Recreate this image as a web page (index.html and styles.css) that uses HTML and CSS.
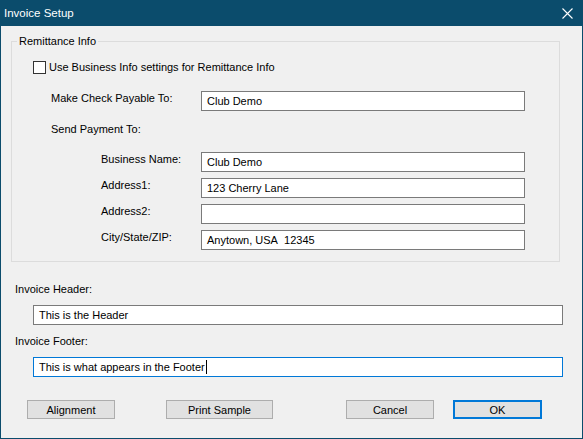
FILE: index.html
```html
<!DOCTYPE html>
<html lang="en">
<head>
    <meta charset="UTF-8">
    <title>Invoice Setup</title>
    <link rel="stylesheet" href="styles.css">
</head>
<body>
    <div class="window">
        <div class="titlebar">
            <span class="title">Invoice Setup</span>
            <svg class="close" width="11" height="11" viewBox="0 0 11 11">
                <path d="M0.5 0.5 L10.5 10.5 M10.5 0.5 L0.5 10.5" stroke="#fff" stroke-width="1.1" fill="none"/>
            </svg>
        </div>

        <div class="group">
            <span class="group-title">Remittance Info</span>

            <div class="row check-row">
                <span class="checkbox"></span>
                <span class="check-label">Use Business Info settings for Remittance Info</span>
            </div>

            <div class="row payable-row">
                <span class="label">Make Check Payable To:</span>
                <div class="field">Club Demo</div>
            </div>

            <div class="row send-row">
                <span class="label">Send Payment To:</span>
            </div>

            <div class="row addr-row first">
                <span class="label indent">Business Name:</span>
                <div class="field">Club Demo</div>
            </div>
            <div class="row addr-row">
                <span class="label indent">Address1:</span>
                <div class="field">123 Cherry Lane</div>
            </div>
            <div class="row addr-row">
                <span class="label indent">Address2:</span>
                <div class="field"></div>
            </div>
            <div class="row addr-row">
                <span class="label indent">City/State/ZIP:</span>
                <div class="field">Anytown, USA&nbsp; 12345</div>
            </div>
        </div>

        <div class="invoice-text">
            <div class="text-label header-label">Invoice Header:</div>
            <div class="field wide">This is the Header</div>
            <div class="text-label">Invoice Footer:</div>
            <div class="field wide focused">This is what appears in the Footer<span class="caret"></span></div>
        </div>

        <div class="buttons">
            <button class="btn align-btn">Alignment</button>
            <button class="btn print-btn">Print Sample</button>
            <button class="btn cancel-btn">Cancel</button>
            <button class="btn ok-btn">OK</button>
        </div>
    </div>
</body>
</html>
```

FILE: styles.css
```css
* {
    margin: 0;
    padding: 0;
    box-sizing: border-box;
}

body {
    background: #f0f0f0;
    font-family: 'Liberation Sans', Arial, sans-serif;
    font-size: 11px;
    color: #000;
}

.window {
    width: 583px;
    height: 439px;
    border: 1px solid #0b4c6c;
    border-top: none;
    background: #f0f0f0;
}

.titlebar {
    height: 26px;
    margin: 0 -1px;
    background: #0b4c6c;
    color: #fff;
    display: flex;
    align-items: center;
    justify-content: space-between;
    padding: 0 10px 0 4px;
}

.title {
    font-size: 11.5px;
    line-height: 15px;
}

.close {
    display: block;
}

/* group box */
.group {
    position: relative;
    margin: 15px 0 0 10px;
    width: 549px;
    border: 1px solid #dcdcdc;
    padding: 0 0 11px 0;
}

.group-title {
    position: absolute;
    top: -8px;
    left: 5px;
    padding: 0 2px;
    background: #f0f0f0;
    line-height: 15px;
}

.row {
    display: flex;
    align-items: flex-start;
    height: 20px;
}

.label {
    width: 189px;
    padding-left: 39px;
    line-height: 15px;
}

.label.indent {
    padding-left: 89px;
}

.check-row {
    margin-top: 15px;
    align-items: center;
    padding-left: 21px;
}

.checkbox {
    width: 13px;
    height: 13px;
    border: 1px solid #333;
    background: #fff;
    margin-right: 3px;
}

.check-label {
    line-height: 15px;
}

.payable-row {
    margin-top: 14px;
}

.send-row {
    margin-top: 11px;
}

.addr-row {
    margin-top: 6px;
}

.addr-row.first {
    margin-top: 10px;
}

.field {
    width: 324px;
    height: 20px;
    border: 1px solid #7a7a7a;
    background: #fff;
    padding-left: 5px;
    line-height: 18px;
    white-space: pre;
}

/* header / footer */
.invoice-text {
    padding-left: 14px;
}

.text-label {
    line-height: 15px;
    margin-top: 9px;
}

.header-label {
    margin-top: 20px;
}

.field.wide {
    width: 530px;
    margin: 8px 0 0 18px;
}

.field.focused {
    border-color: #0078d7;
}

.caret {
    display: inline-block;
    width: 1px;
    height: 14px;
    background: #000;
    vertical-align: -3px;
    margin-left: 1px;
}

/* buttons */
.buttons {
    display: flex;
    margin-top: 23px;
    padding-left: 26px;
}

.btn {
    height: 19px;
    background: #e1e1e1;
    border: 1px solid #adadad;
    font-family: inherit;
    font-size: 11px;
    color: #000;
}

.align-btn {
    width: 88px;
}

.print-btn {
    width: 107px;
    margin-left: 51px;
}

.cancel-btn {
    width: 88px;
    margin-left: 73px;
}

.ok-btn {
    width: 89px;
    margin-left: 19px;
    border: 2px solid #0078d7;
}
```
